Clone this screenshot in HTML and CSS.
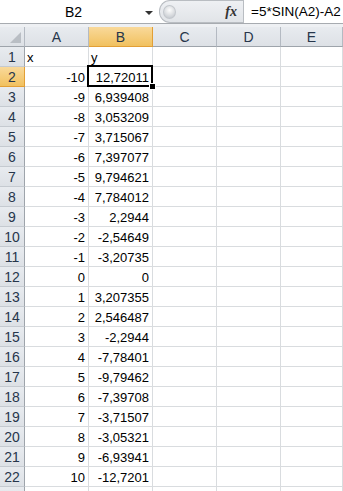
FILE: index.html
```html
<!DOCTYPE html>
<html>
<head>
	<meta charset="utf-8">
	<title>Sheet1</title>
	<link rel="stylesheet" href="styles.css">
</head>
<body>
  <div class="formula-bar">
    <div class="name-box">
      <span class="name">B2</span>
      <span class="arrow"></span>
    </div>
    <div class="fx-area">
      <span class="knob"></span>
      <span class="fx">fx</span>
    </div>
    <div class="formula">=5*SIN(A2)-A2</div>
  </div>
  <div class="band"></div>

  <div class="sheet">
    <div class="hd corner"><span class="tri"></span></div>
    <div class="hd col">A</div>
    <div class="hd col sel">B</div>
    <div class="hd col">C</div>
    <div class="hd col">D</div>
    <div class="hd col">E</div>

    <div class="hd row">1</div><div class="c txt">x</div><div class="c txt">y</div><div class="c"></div><div class="c"></div><div class="c"></div>
    <div class="hd row sel">2</div><div class="c">-10</div><div class="c active">12,72011</div><div class="c"></div><div class="c"></div><div class="c"></div>
    <div class="hd row">3</div><div class="c">-9</div><div class="c">6,939408</div><div class="c"></div><div class="c"></div><div class="c"></div>
    <div class="hd row">4</div><div class="c">-8</div><div class="c">3,053209</div><div class="c"></div><div class="c"></div><div class="c"></div>
    <div class="hd row">5</div><div class="c">-7</div><div class="c">3,715067</div><div class="c"></div><div class="c"></div><div class="c"></div>
    <div class="hd row">6</div><div class="c">-6</div><div class="c">7,397077</div><div class="c"></div><div class="c"></div><div class="c"></div>
    <div class="hd row">7</div><div class="c">-5</div><div class="c">9,794621</div><div class="c"></div><div class="c"></div><div class="c"></div>
    <div class="hd row">8</div><div class="c">-4</div><div class="c">7,784012</div><div class="c"></div><div class="c"></div><div class="c"></div>
    <div class="hd row">9</div><div class="c">-3</div><div class="c">2,2944</div><div class="c"></div><div class="c"></div><div class="c"></div>
    <div class="hd row">10</div><div class="c">-2</div><div class="c">-2,54649</div><div class="c"></div><div class="c"></div><div class="c"></div>
    <div class="hd row">11</div><div class="c">-1</div><div class="c">-3,20735</div><div class="c"></div><div class="c"></div><div class="c"></div>
    <div class="hd row">12</div><div class="c">0</div><div class="c">0</div><div class="c"></div><div class="c"></div><div class="c"></div>
    <div class="hd row">13</div><div class="c">1</div><div class="c">3,207355</div><div class="c"></div><div class="c"></div><div class="c"></div>
    <div class="hd row">14</div><div class="c">2</div><div class="c">2,546487</div><div class="c"></div><div class="c"></div><div class="c"></div>
    <div class="hd row">15</div><div class="c">3</div><div class="c">-2,2944</div><div class="c"></div><div class="c"></div><div class="c"></div>
    <div class="hd row">16</div><div class="c">4</div><div class="c">-7,78401</div><div class="c"></div><div class="c"></div><div class="c"></div>
    <div class="hd row">17</div><div class="c">5</div><div class="c">-9,79462</div><div class="c"></div><div class="c"></div><div class="c"></div>
    <div class="hd row">18</div><div class="c">6</div><div class="c">-7,39708</div><div class="c"></div><div class="c"></div><div class="c"></div>
    <div class="hd row">19</div><div class="c">7</div><div class="c">-3,71507</div><div class="c"></div><div class="c"></div><div class="c"></div>
    <div class="hd row">20</div><div class="c">8</div><div class="c">-3,05321</div><div class="c"></div><div class="c"></div><div class="c"></div>
    <div class="hd row">21</div><div class="c">9</div><div class="c">-6,93941</div><div class="c"></div><div class="c"></div><div class="c"></div>
    <div class="hd row">22</div><div class="c">10</div><div class="c">-12,7201</div><div class="c"></div><div class="c"></div><div class="c"></div>
    <div class="hd row"></div><div class="c"></div><div class="c"></div><div class="c"></div><div class="c"></div><div class="c"></div>
  </div>
</body>
</html>
```

FILE: styles.css
```css
html, body {
	margin: 0;
	padding: 0;
	height: 491px;
	overflow: hidden;
	background: #fff;
}
body {
	font-family: "Liberation Sans", Arial, sans-serif;
	font-size: 13px;
	color: #000;
}

/* formula bar */
.formula-bar {
	display: flex;
	height: 23px;
	border-bottom: 1px solid #a7abb0;
	background: #fff;
}
.name-box {
	width: 159px;
	display: flex;
	align-items: center;
}
.name {
	flex: 1;
	text-align: center;
	padding-left: 2px;
	font-size: 14px;
}
.arrow {
	width: 0;
	height: 0;
	border-left: 4px solid transparent;
	border-right: 4px solid transparent;
	border-top: 4px solid #333;
	margin-right: 6px;
	margin-top: 2px;
}
.fx-area {
	width: 84px;
	display: flex;
	align-items: center;
	justify-content: space-between;
	background: linear-gradient(#eef0f3, #e1e4e8);
	border: 1px solid #b9bdc2;
	border-right: none;
	border-radius: 11px 0 0 11px;
	box-sizing: border-box;
	height: 23px;
}
.knob {
	width: 11px;
	height: 12px;
	margin-left: 3px;
	border-radius: 50%;
	background: radial-gradient(circle at 50% 35%, #fdfdfd, #c9cdd2 80%);
	border: 1px solid #c3c7cc;
}
.fx {
	font-family: "Liberation Serif", serif;
	font-style: italic;
	font-weight: bold;
	font-size: 14px;
	color: #333;
	margin-right: 6px;
}
.formula {
	flex: 1;
	border-left: 1px solid #b9bdc2;
	padding-left: 7px;
	line-height: 23px;
	font-size: 13.5px;
	white-space: nowrap;
	overflow: hidden;
}
.band {
	height: 3px;
	background: #eef0f3;
}

/* grid */
.sheet {
	display: grid;
	grid-template-columns: 25px 64px 64px 64px 64px 62px;
	grid-auto-rows: 20px;
}
.hd {
	box-sizing: border-box;
	background: linear-gradient(#e8ebef, #dde1e6);
	color: #27364b;
	display: flex;
	align-items: center;
	justify-content: center;
	font-size: 14px;
}
.col {
	border-right: 1px solid #b4bac2;
	border-bottom: 1px solid #9ea4ab;
}
.row {
	border-right: 1px solid #9ea4ab;
	border-bottom: 1px solid #c5cad0;
}
.corner {
	border-right: 1px solid #b4bac2;
	border-bottom: 1px solid #9ea4ab;
	position: relative;
}
.tri {
	position: absolute;
	right: 3px;
	bottom: 3px;
	width: 0;
	height: 0;
	border-left: 11px solid transparent;
	border-bottom: 11px solid #b9bec4;
}
.hd.sel {
	background: linear-gradient(#f9d99a, #f1c15f);
	border-color: #e29f36;
}
.c {
	box-sizing: border-box;
	border-right: 1px solid #d9dcdf;
	border-bottom: 1px solid #d9dcdf;
	text-align: right;
	padding: 3px 3px 0 2px;
	line-height: 16px;
	white-space: nowrap;
}
.c.txt {
	text-align: left;
}
.active {
	position: relative;
}
.active::before {
	content: "";
	position: absolute;
	left: -2px;
	top: -2px;
	right: -1px;
	bottom: -1px;
	border: 2px solid #000;
}
.active::after {
	content: "";
	position: absolute;
	right: -4px;
	bottom: -4px;
	width: 5px;
	height: 5px;
	background: #000;
	border: 1px solid #fff;
}
```
